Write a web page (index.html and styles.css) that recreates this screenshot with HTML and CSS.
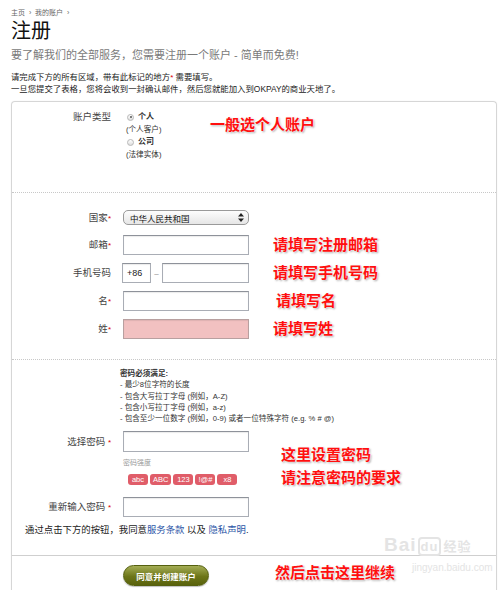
FILE: index.html
```html
<!DOCTYPE html>
<html lang="zh-CN">
<head>
<meta charset="utf-8">
<title>注册</title>
<link rel="stylesheet" href="styles.css">
</head>
<body>
<div class="page">
  <div class="crumbs">主页 &nbsp;›&nbsp; 我的账户 &nbsp;›</div>
  <h1 class="title">注册</h1>
  <p class="subtitle">要了解我们的全部服务，您需要注册一个账户 - 简单而免费!</p>
  <p class="intro">请完成下方的所有区域，带有此标记的地方<span class="req">*</span> 需要填写。<br>一旦您提交了表格，您将会收到一封确认邮件，然后您就能加入到OKPAY的商业天地了。</p>

  <div class="card">
    <div class="section sec-type">
      <div class="row row-top">
        <div class="label">账户类型</div>
        <div class="radios">
          <div class="opt"><span class="radio on"></span><b>个人</b></div>
          <div class="sub">(个人客户)</div>
          <div class="opt"><span class="radio"></span><b>公司</b></div>
          <div class="sub">(法律实体)</div>
        </div>
        <div class="note note-type">一般选个人账户</div>
      </div>
    </div>

    <div class="section sec-info">
      <div class="row row-select">
        <div class="label">国家<span class="req">*</span></div>
        <div class="select">
          <span>中华人民共和国</span>
          <svg class="arrows" width="6" height="9" viewBox="0 0 6 9"><path d="M3 0 L6 3.5 H0 Z M3 9 L6 5.5 H0 Z" fill="#222"/></svg>
        </div>
      </div>
      <div class="row">
        <div class="label">邮箱<span class="req">*</span></div>
        <div class="input"></div>
        <div class="note">请填写注册邮箱</div>
      </div>
      <div class="row">
        <div class="label">手机号码</div>
        <div class="phone">
          <div class="input code">+86</div>
          <span class="dash">–</span>
          <div class="input num"></div>
        </div>
        <div class="note">请填写手机号码</div>
      </div>
      <div class="row">
        <div class="label">名<span class="req">*</span></div>
        <div class="input"></div>
        <div class="note note-name">请填写名</div>
      </div>
      <div class="row">
        <div class="label">姓<span class="req">*</span></div>
        <div class="input error"></div>
        <div class="note">请填写姓</div>
      </div>
    </div>

    <div class="section sec-pass">
      <div class="rules">
        <b>密码必须满足:</b><br>
        - 最少8位字符的长度<br>
        - 包含大写拉丁字母 (例如，A-Z)<br>
        - 包含小写拉丁字母 (例如，a-z)<br>
        - 包含至少一位数字 (例如，0-9) 或者一位特殊字符 (e.g. % # @)
      </div>
      <div class="row row-pass">
        <div class="label">选择密码 <span class="req">*</span></div>
        <div class="input tall"></div>
      </div>
      <div class="row row-strength">
        <div class="spacer"></div>
        <div class="strength">
          <div class="strength-label">密码强度</div>
          <div class="badges">
            <span class="badge">abc</span>
            <span class="badge">ABC</span>
            <span class="badge">123</span>
            <span class="badge">!@#</span>
            <span class="badge">x8</span>
          </div>
        </div>
        <div class="note note-pass">这里设置密码<br>请注意密码的要求</div>
      </div>
      <div class="row row-confirm">
        <div class="label">重新输入密码 <span class="req">*</span></div>
        <div class="input"></div>
      </div>
      <p class="agree">通过点击下方的按钮，我同意<a href="#">服务条款</a> 以及 <a href="#">隐私声明</a>.</p>
    </div>

    <div class="section sec-submit">
      <div class="row">
        <div class="spacer"></div>
        <button class="btn" type="button">同意并创建账户</button>
        <div class="note note-btn">然后点击这里继续</div>
      </div>
      <div class="watermark">
        <div class="wm-logo">Bai<span class="wm-du">du</span><span class="wm-cn">经验</span></div>
        <div class="wm-url">jingyan.baidu.com</div>
      </div>
    </div>
  </div>
</div>
</body>
</html>
```

FILE: styles.css
```css
* { box-sizing: border-box; }

body {
  margin: 0;
  background: #fff;
  font-family: "Liberation Sans", "Noto Sans CJK SC", sans-serif;
  color: #333;
}

.page {
  padding: 0 3px 0 11px;
}

.crumbs {
  margin-top: 8px;
  font-size: 7px;
  line-height: 10px;
  color: #666;
}

.title {
  margin: 0;
  font-size: 20px;
  line-height: 26px;
  font-weight: normal;
  color: #111;
}

.subtitle {
  margin: 4px 0 0;
  font-size: 11px;
  line-height: 14px;
  color: #7a7a7a;
}

.intro {
  margin: 9px 0 0;
  font-size: 8.4px;
  line-height: 12px;
  color: #222;
}

.req {
  color: #d00;
  font-size: 8px;
  line-height: 0;
}

.card {
  margin-top: 6px;
  border: 1px solid #d6d6d6;
  border-bottom: none;
  border-radius: 4px 4px 0 0;
  box-shadow: 0 0 2px rgba(0,0,0,0.06);
}

.section {
  border-bottom: 1px dotted #c8c8c8;
}

.row {
  display: flex;
  align-items: center;
}

.label {
  width: 99px;
  flex: none;
  text-align: right;
  font-size: 9.5px;
  line-height: 12px;
  color: #444;
  margin-right: 12px;
}

.spacer {
  width: 111px;
  flex: none;
}

/* account type */
.sec-type {
  padding: 9px 0 31px;
}

.row-top {
  align-items: flex-start;
}

.radios {
  width: 84px;
  flex: none;
  padding-left: 4px;
  font-size: 7.6px;
  line-height: 12.5px;
  color: #333;
}

.opt {
  display: flex;
  align-items: center;
  gap: 4px;
}

.opt b {
  font-size: 8px;
}

.sub {
  margin-left: -1px;
}

.radio {
  width: 7px;
  height: 7px;
  border-radius: 50%;
  border: 1px solid #b8b8b8;
  background: linear-gradient(#fff, #ddd);
  position: relative;
}

.radio.on::after {
  content: "";
  position: absolute;
  left: 1.5px;
  top: 1.5px;
  width: 2px;
  height: 2px;
  border-radius: 50%;
  background: #555;
}

.note {
  margin-left: 24px;
  font-size: 15px;
  line-height: 18px;
  font-weight: bold;
  color: #ff0f0f;
  white-space: nowrap;
  text-shadow: 0 0 2px #fff, 0 0 3px #fff, 1px 1px 2px rgba(0,0,0,0.45);
}

.note-type {
  margin-left: 3px;
  margin-top: 5px;
}

/* info section */
.sec-info {
  padding: 17px 0 20px;
}

.sec-info .row + .row {
  margin-top: 8px;
}

.sec-info .row-select + .row {
  margin-top: 10px;
}

.select {
  width: 126px;
  height: 15px;
  border: 1px solid #9a9a9a;
  border-radius: 5px;
  background: linear-gradient(#fdfdfd, #e6e6e6);
  display: flex;
  align-items: center;
  justify-content: space-between;
  padding: 0 4px 0 6px;
  font-size: 8.5px;
  color: #111;
}

.input {
  width: 126px;
  height: 20px;
  border: 1px solid #a9adb5;
  border-top-color: #8e929a;
  background: #fff;
  box-shadow: inset 0 1px 1px rgba(0,0,0,0.08);
}

.input.tall {
  height: 21px;
}

.input.error {
  background: #f2c1c1;
  border-color: #b8a0a0;
}

.phone {
  width: 127px;
  margin-left: -1px;
  display: flex;
  align-items: center;
}

.input.code {
  width: 29px;
  font-size: 9px;
  line-height: 18px;
  padding-left: 4px;
  color: #222;
}

.dash {
  width: 11px;
  text-align: center;
  font-size: 8px;
  color: #888;
}

.input.num {
  width: 87px;
}

.note-name {
  margin-left: 27px;
}

/* password */
.sec-pass {
  padding: 8px 0 19px;
  border-bottom: 1px solid #cfcfcf;
}

.rules {
  margin-left: 108px;
  font-size: 7.6px;
  line-height: 11.3px;
  color: #333;
}

.row-pass {
  margin-top: 7px;
}

.row-strength {
  align-items: flex-start;
  margin-top: 6px;
}

.strength {
  width: 126px;
  flex: none;
}

.strength-label {
  font-size: 7px;
  line-height: 10px;
  color: #999;
}

.badges {
  margin-top: 6px;
  padding-left: 5px;
  display: flex;
  gap: 2px;
}

.badge {
  min-width: 20px;
  height: 11px;
  padding: 0 3px;
  border-radius: 3px;
  background: #e05d69;
  color: #fff;
  font-size: 7.5px;
  line-height: 11px;
  text-align: center;
}

.note-pass {
  margin-left: 32px;
  margin-top: -15px;
  line-height: 23px;
}

.row-confirm {
  margin-top: 8px;
}

.agree {
  margin: 7px 0 0 13px;
  font-size: 9.4px;
  line-height: 12px;
  color: #222;
}

.agree a {
  color: #2a55a6;
  text-decoration: none;
}

/* submit */
.sec-submit {
  border-bottom: none;
  padding: 9px 0 10px;
  position: relative;
}

.btn {
  width: 86px;
  height: 21px;
  border: 1px solid #55600f;
  border-radius: 11px;
  background: linear-gradient(#a4ad55, #6d7619 55%, #59620c);
  color: #fff;
  font-family: "Liberation Sans", "Noto Sans CJK SC", sans-serif;
  font-size: 8.5px;
  font-weight: bold;
  padding: 0;
  box-shadow: 0 1px 1px rgba(0,0,0,0.25);
}

.note-btn {
  margin-left: 66px;
  margin-top: -5px;
}

.watermark {
  position: absolute;
  left: 372px;
  top: -22px;
  color: #e4e4e4;
  white-space: nowrap;
  pointer-events: none;
}

.wm-logo {
  font-size: 19px;
  line-height: 22px;
  font-weight: bold;
  letter-spacing: 1px;
}

.wm-du {
  font-size: 13px;
  border: 2px solid #e4e4e4;
  border-radius: 4px;
  padding: 0 1px;
  margin: 0 2px 0 1px;
}

.wm-cn {
  font-size: 13px;
}

.wm-url {
  margin-left: 28px;
  font-size: 10px;
  line-height: 12px;
  margin-top: 4px;
}
```
